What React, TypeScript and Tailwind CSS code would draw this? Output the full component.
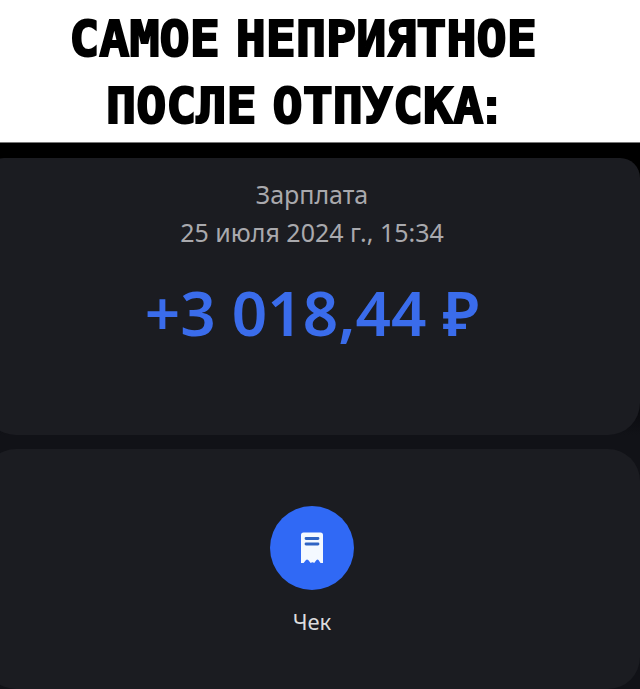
import type { ReactNode } from 'react'

function ReceiptIcon() {
  return (
    <svg viewBox="0 0 24 32" className="h-8 w-6" aria-hidden="true">
      <path
        d="M3.5 0.5H20.5Q23 0.5 23 3V31H20.5L18.5 28Q17.5 26.8 16.5 28L14.2 31Q12.5 29.6 10.7 31L8.2 28Q7 26.8 6 28L3.6 31H1V3Q1 0.5 3.5 0.5Z"
        fill="#f4f9ff"
      />
      <path d="M6 6.5H18M6 12H18" stroke="#2f64c4" strokeWidth="2.8" strokeLinecap="round" />
    </svg>
  )
}

function Card({ className, children }: { className: string; children: ReactNode }) {
  return (
    <section className={`flex flex-col items-center bg-[#1b1c21] ${className}`}>
      {children}
    </section>
  )
}

export default function App() {
  return (
    <div className="flex min-h-screen flex-col overflow-hidden bg-[#111217] font-['Noto_Sans',sans-serif]">
      <header className="border-b border-[#777777] bg-white pt-[6px] pr-[34px] pb-[2px]">
        <h1 className="flex flex-wrap justify-center gap-x-4 px-10 font-['DejaVu_Sans_Mono',monospace] text-[50px] leading-[67px] font-bold text-black [-webkit-text-stroke:2px_black]">
          <span>САМОЕ</span> <span>НЕПРИЯТНОЕ</span> <span>ПОСЛЕ</span>{' '}
          <span>
            ОТПУСКА<span className="font-['Liberation_Sans',sans-serif]">:</span>
          </span>
        </h1>
      </header>

      {/* Cards run off the left edge */}
      <main className="-ml-4 flex flex-1 flex-col gap-[14px]">
        <div className="bg-gradient-to-b from-black from-50% to-[#111217] pt-[15px]">
          <Card className="rounded-t-[20px] rounded-b-[32px] pt-[17px] pb-[79px]">
            <p className="text-[25px] leading-[38px] text-[#a9a9ad]">Зарплата</p>
            <p className="text-[25px] leading-[38px] text-[#a9a9ad]">25 июля 2024 г., 15:34</p>
            <p className="mt-[17px] text-[62px] leading-[88px] font-semibold text-[#3a6ceb]">
              +3 018,44 ₽
            </p>
          </Card>
        </div>

        <Card className="flex-1 rounded-[32px] pt-[57px] pb-[50px]">
          <button type="button" className="flex flex-col items-center gap-4">
            <span className="flex size-[84px] items-center justify-center rounded-full bg-[#3069f5]">
              <ReceiptIcon />
            </span>
            <span className="text-[22px] leading-[30px] text-[#dcdcde]">Чек</span>
          </button>
        </Card>
      </main>
    </div>
  )
}
